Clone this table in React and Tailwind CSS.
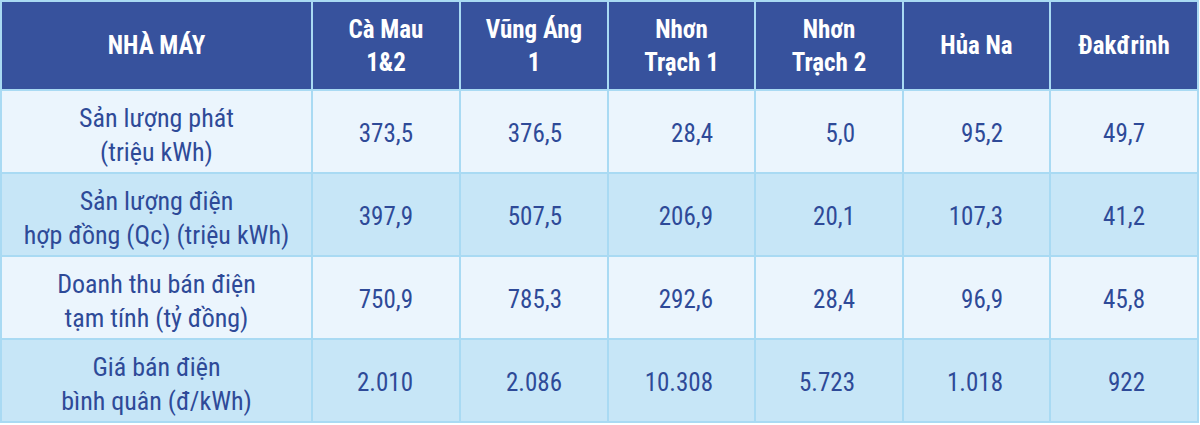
import React from "react";

const headers = [
  ["NHÀ MÁY"],
  ["Cà Mau", "1&2"],
  ["Vũng Áng", "1"],
  ["Nhơn", "Trạch 1"],
  ["Nhơn", "Trạch 2"],
  ["Hủa Na"],
  ["Đakđrinh"],
];

const rows = [
  { label: ["Sản lượng phát", "(triệu kWh)"], vals: ["373,5", "376,5", "28,4", "5,0", "95,2", "49,7"], bg: "bg-[#ebf5fd]" },
  { label: ["Sản lượng điện", "hợp đồng (Qc) (triệu kWh)"], vals: ["397,9", "507,5", "206,9", "20,1", "107,3", "41,2"], bg: "bg-[#c7e6f7]" },
  { label: ["Doanh thu bán điện", "tạm tính (tỷ đồng)"], vals: ["750,9", "785,3", "292,6", "28,4", "96,9", "45,8"], bg: "bg-[#ebf5fd]" },
  { label: ["Giá bán điện", "bình quân (đ/kWh)"], vals: ["2.010", "2.086", "10.308", "5.723", "1.018", "922"], bg: "bg-[#c7e6f7]" },
];

const padR = ["pr-[46px]", "pr-[45px]", "pr-[41px]", "pr-[47px]", "pr-[46px]", "pr-[52px]"];

export default function App() {
  return (
    <div
      className="w-[1200px] h-[425px] bg-white"
      style={{ fontFamily: '"Roboto Condensed", Roboto, "Liberation Sans", sans-serif' }}
    >
      <div className="w-[1199px] grid grid-cols-[309px_146px_146px_145px_146px_145px_146px] grid-rows-[87px_81px_81px_81px_81px] gap-[2px] p-[2px] bg-[#a9daf3]">
        {headers.map((h, i) => (
          <div
            key={i}
            className="bg-[#37529d] text-white font-bold text-[25px] leading-[33px] flex flex-col items-center justify-center text-center"
          >
            {h.map((l, j) => (
              <span key={j}>{l}</span>
            ))}
          </div>
        ))}
        {rows.map((r, ri) => (
          <React.Fragment key={ri}>
            <div className={`${r.bg} text-[#2e4a98] text-[26px] leading-[34px] flex flex-col items-center justify-center text-center pt-[6px]`}>
              {r.label.map((l, j) => (
                <span key={j}>{l}</span>
              ))}
            </div>
            {r.vals.map((v, vi) => (
              <div
                key={vi}
                className={`${r.bg} text-[#2e4a98] text-[25px] flex items-center justify-end pt-[5px] ${padR[vi]}`}
              >
                {v}
              </div>
            ))}
          </React.Fragment>
        ))}
      </div>
    </div>
  );
}
